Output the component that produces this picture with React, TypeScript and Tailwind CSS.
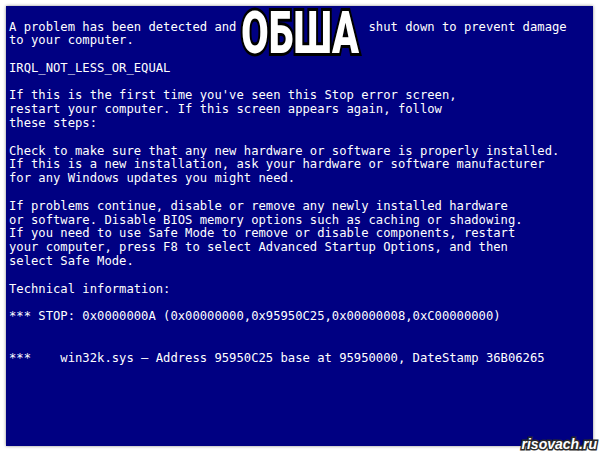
import React from 'react';

const lines = [
  'A problem has been detected and                  shut down to prevent damage',
  'to your computer.',
  '',
  'IRQL_NOT_LESS_OR_EQUAL',
  '',
  "If this is the first time you've seen this Stop error screen,",
  'restart your computer. If this screen appears again, follow',
  'these steps:',
  '',
  'Check to make sure that any new hardware or software is properly installed.',
  'If this is a new installation, ask your hardware or software manufacturer',
  'for any Windows updates you might need.',
  '',
  'If problems continue, disable or remove any newly installed hardware',
  'or software. Disable BIOS memory options such as caching or shadowing.',
  'If you need to use Safe Mode to remove or disable components, restart',
  'your computer, press F8 to select Advanced Startup Options, and then',
  'select Safe Mode.',
  '',
  'Technical information:',
  '',
  '*** STOP: 0x0000000A (0x00000000,0x95950C25,0x00000008,0xC00000000)',
  '',
  '',
  '***    win32k.sys – Address 95950C25 base at 95950000, DateStamp 36B06265',
];

const App: React.FC = () => {
  return (
    <div className="relative w-[600px] h-[452px] bg-white overflow-hidden">
      <div className="ml-[6px] mt-[6px] w-[587px] h-[440px] bg-[#000082] shadow-[0_0_3px_rgba(0,0,0,0.45)] pl-[3px] pt-[14.5px]">
        <pre className="font-['DejaVu_Sans_Mono',monospace] text-[12.2px] leading-[13.8px] text-white whitespace-pre">
          {lines.map((line, i) => (
            <div key={i} className="h-[13.8px]">{line}</div>
          ))}
        </pre>
      </div>

      {/* meme caption */}
      <div className="absolute left-0 right-0 top-[3px] flex justify-center">
        <span className="inline-block scale-x-[0.66] font-['Roboto',sans-serif] font-black text-[60px] leading-none text-white [-webkit-text-stroke:6px_#000] [paint-order:stroke_fill]">
          ОБША
        </span>
      </div>

      {/* watermark */}
      <div className="absolute right-[3px] bottom-[1px] font-['Liberation_Sans',sans-serif] font-bold italic text-[14px] leading-none text-white [-webkit-text-stroke:3px_#2a2a2a] [paint-order:stroke_fill]">
        risovach.ru
      </div>
    </div>
  );
};

export default App;
